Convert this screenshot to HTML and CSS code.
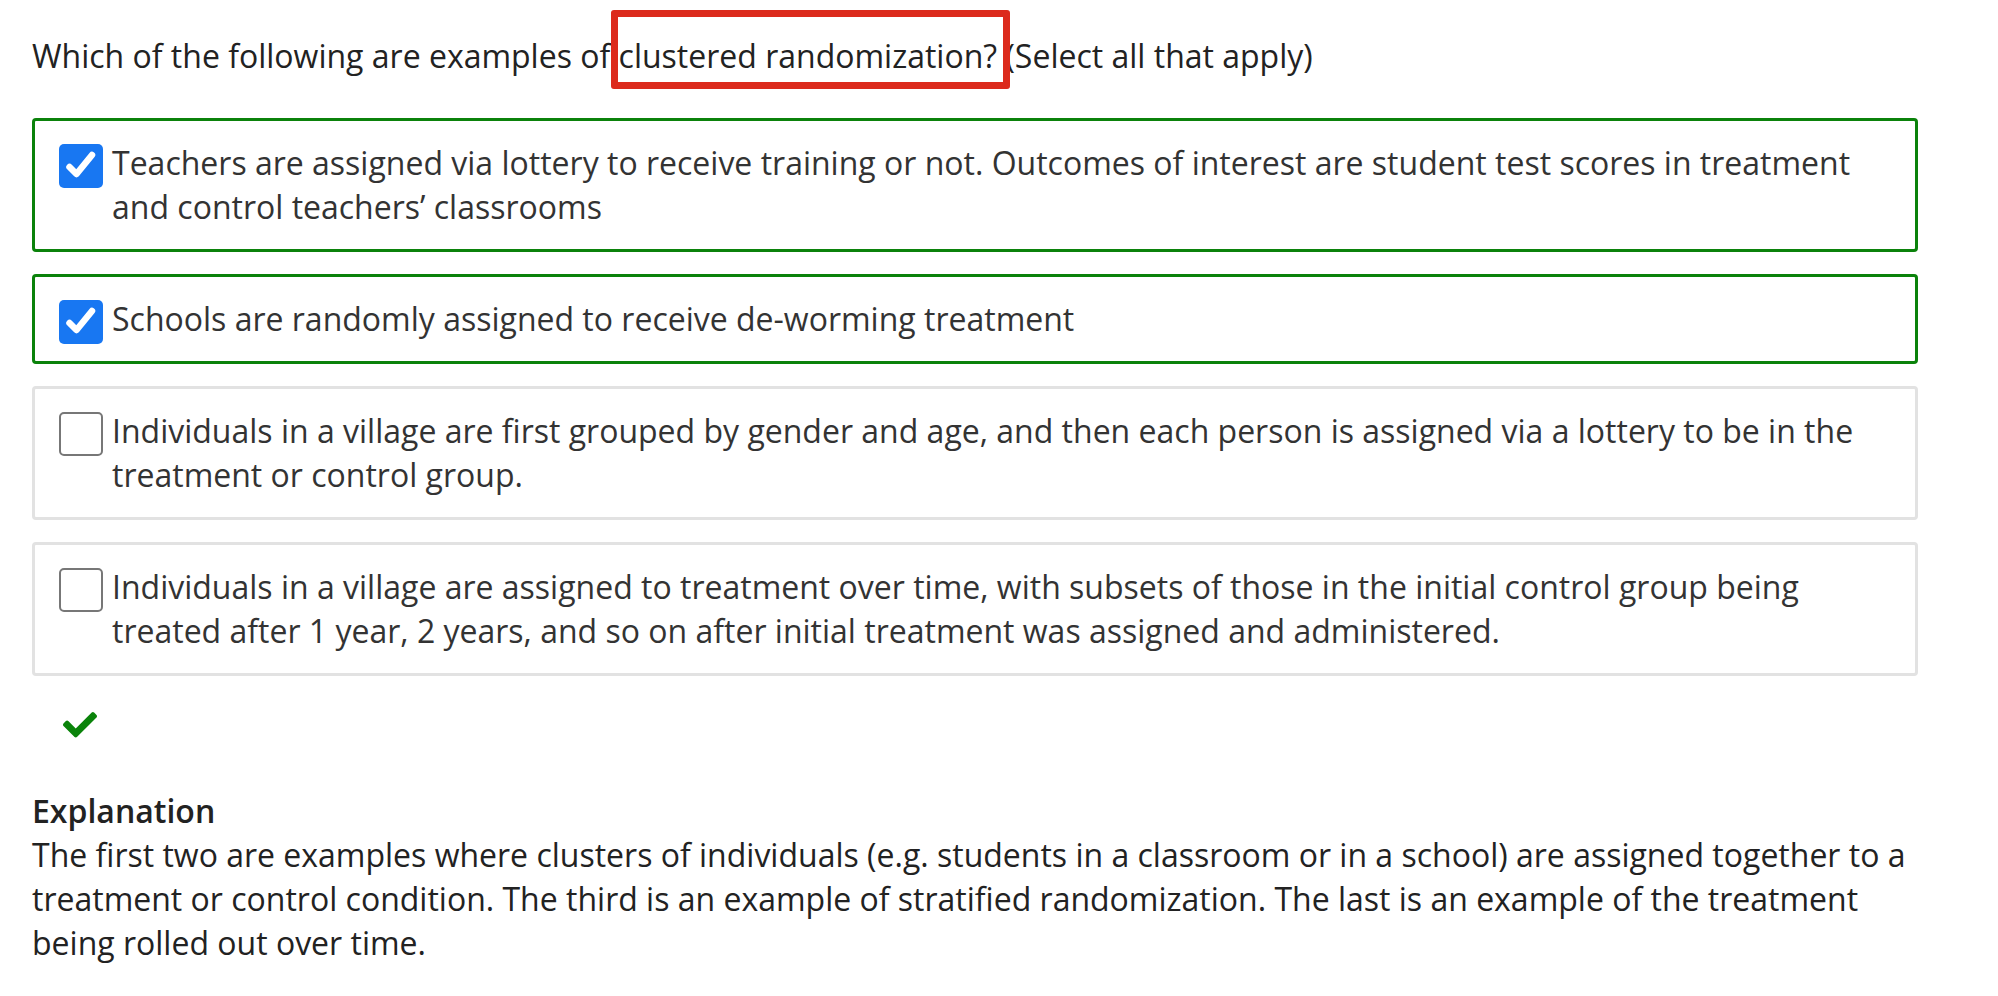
FILE: index.html
```html
<!DOCTYPE html>
<html lang="en">
<head>
<meta charset="utf-8">
<title>Clustered randomization quiz</title>
<link rel="stylesheet" href="styles.css">
</head>
<body>
<main class="page">
  <p class="question">Which of the following are examples of <span class="hl">clustered randomization?</span> (Select all that apply)</p>
  <ul class="options">
    <li class="option correct">
      <span class="cb checked"><svg viewBox="0 0 44 44" width="44" height="44"><path d="M10.5 23 L17.5 30 L33 11" fill="none" stroke="#fff" stroke-width="6.5" stroke-linecap="round" stroke-linejoin="round"/></svg></span>
      <span class="label">Teachers are assigned via lottery to receive training or not. Outcomes of interest are student test scores in treatment and control teachers’ classrooms</span>
    </li>
    <li class="option correct">
      <span class="cb checked"><svg viewBox="0 0 44 44" width="44" height="44"><path d="M10.5 23 L17.5 30 L33 11" fill="none" stroke="#fff" stroke-width="6.5" stroke-linecap="round" stroke-linejoin="round"/></svg></span>
      <span class="label">Schools are randomly assigned to receive de-worming treatment</span>
    </li>
    <li class="option">
      <span class="cb"></span>
      <span class="label">Individuals in a village are first grouped by gender and age, and then each person is assigned via a lottery to be in the treatment or control group.</span>
    </li>
    <li class="option">
      <span class="cb"></span>
      <span class="label">Individuals in a village are assigned to treatment over time, with subsets of those in the initial control group being treated after 1 year, 2 years, and so on after initial treatment was assigned and administered.</span>
    </li>
  </ul>
  <div class="result">
    <svg viewBox="0 64 512 384" width="34" height="25.5"><path fill="#0a830a" d="M173.898 439.404l-166.4-166.4c-9.997-9.997-9.997-26.206 0-36.204l36.203-36.204c9.997-9.998 26.207-9.998 36.204 0L192 312.69 432.095 72.596c9.997-9.997 26.207-9.997 36.204 0l36.203 36.204c9.997 9.997 9.997 26.206 0 36.204l-294.4 294.401c-9.998 9.997-26.207 9.997-36.204-.001z"/></svg>
  </div>
  <section class="explanation">
    <h4 class="exp-title">Explanation</h4>
    <p class="exp-text">The first two are examples where clusters of individuals (e.g. students in a classroom or in a school) are assigned together to a treatment or control condition. The third is an example of stratified randomization. The last is an example of the treatment being rolled out over time.</p>
  </section>
</main>
</body>
</html>
```

FILE: styles.css
```css
html, body {
  margin: 0;
  padding: 0;
  background: #fff;
}
body {
  font-family: "Open Sans", "Noto Sans", sans-serif;
  font-size: 32px;
  line-height: 44px;
  color: #333;
}
.page {
  width: 1886px;
  padding: 34px 0 0 32px;
}
.question {
  margin: 0 0 40px;
  color: #222;
}
.hl {
  position: relative;
}
.hl::after {
  content: "";
  position: absolute;
  left: -8px;
  right: -13px;
  top: -24px;
  bottom: -12px;
  border: 7px solid #dc2a1c;
  border-radius: 3px;
}
.options {
  list-style: none;
  margin: 0;
  padding: 0;
  display: flex;
  flex-direction: column;
  gap: 22px;
}
.option {
  display: flex;
  align-items: flex-start;
  gap: 9px;
  padding: 20px 20px 20px 24px;
  border: 3px solid #e2e2e2;
  border-radius: 4px;
}
.option.correct {
  border-color: #0b820b;
}
.cb {
  flex: none;
  box-sizing: border-box;
  width: 44px;
  height: 44px;
  margin: 3px 0 -3px;
  border: 2px solid #777;
  border-radius: 5px;
  background: #fff;
  overflow: hidden;
}
.cb.checked {
  background: #1877f2;
  border: none;
}
.cb svg {
  display: block;
}
.label {
  flex: 1;
}
.result {
  padding: 36px 0 0 31px;
}
.result svg {
  display: block;
}
.explanation {
  margin-top: 51px;
}
.exp-title {
  margin: 0;
  font-size: 32px;
  font-weight: 600;
  color: #222;
}
.exp-text {
  margin: 0;
  color: #222;
}
```
